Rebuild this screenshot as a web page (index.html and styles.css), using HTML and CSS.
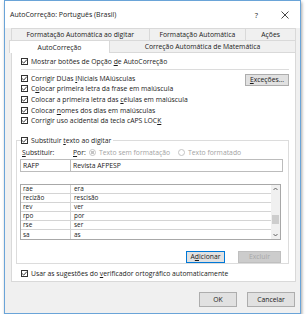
FILE: index.html
```html
<!DOCTYPE html>
<html lang="pt-BR">

<head>
    <meta charset="UTF-8">
    <meta name="viewport" content="width=device-width, initial-scale=1.0">
    <title>AutoCorreção</title>
    <link rel="stylesheet" href="styles.css">
</head>

<body>
    <div class="window">
        <div class="titlebar">
            <span class="title">AutoCorreção: Português (Brasil)</span>
            <span class="help">?</span>
            <svg class="close" width="8" height="8" viewBox="0 0 8 8">
                <path d="M0.5 0.5 L7.5 7.5 M7.5 0.5 L0.5 7.5" stroke="#333" stroke-width="0.9" fill="none" />
            </svg>
        </div>

        <div class="tabs">
            <div class="tab-row back">
                <div class="tab t1">Formatação Automática ao digitar</div>
                <div class="tab t2">Formatação Automática</div>
                <div class="tab t3">Ações</div>
            </div>
            <div class="tab-row front">
                <div class="tab t4 active">AutoCorreção</div>
                <div class="tab t5">Correção Automática de Matemática</div>
            </div>
        </div>

        <div class="panel">
            <label class="check first"><span class="cb"></span><span>Mostrar botões de Opção <u>d</u>e AutoCorreção</span></label>
            <div class="sep"></div>

            <div class="options">
                <div class="option-list">
                    <label class="check"><span class="cb"></span><span>Corrigir DUas <u>I</u>Niciais MAiúsculas</span></label>
                    <label class="check"><span class="cb"></span><span>C<u>o</u>locar primeira letra da frase em maiúscula</span></label>
                    <label class="check"><span class="cb"></span><span>Colocar a primeira letra das <u>c</u>élulas em maiúscula</span></label>
                    <label class="check"><span class="cb"></span><span>Colocar <u>n</u>omes dos dias em maiúsculas</span></label>
                    <label class="check"><span class="cb"></span><span>Corrigir uso acidental da tecla cAPS LOC<u>K</u></span></label>
                </div>
                <div class="btn exc"><span><u>E</u>xceções...</span></div>
            </div>

            <div class="group">
                <label class="check legend"><span class="cb"></span><span>Substituir <u>t</u>exto ao digitar</span></label>

                <div class="labels">
                    <span class="lbl-sub"><u>S</u>ubstituir:</span>
                    <span class="lbl-por"><u>P</u>or:</span>
                    <span class="radio on"></span><span class="dim">Texto sem formatação</span>
                    <span class="radio"></span><span class="dim">Texto formatado</span>
                </div>

                <div class="inputs">
                    <div class="field f-sub">RAFP</div>
                    <div class="field f-por">Revista AFPESP</div>
                </div>

                <div class="list">
                    <div class="rows">
                        <div class="row"><span>rae</span><span>era</span></div>
                        <div class="row"><span>recizão</span><span>rescisão</span></div>
                        <div class="row"><span>rev</span><span>ver</span></div>
                        <div class="row"><span>rpo</span><span>por</span></div>
                        <div class="row"><span>rse</span><span>ser</span></div>
                        <div class="row"><span>sa</span><span>as</span></div>
                    </div>
                    <div class="scrollbar">
                        <svg width="9" height="8" viewBox="0 0 9 8">
                            <path d="M2.5 5 L4.5 3 L6.5 5" stroke="#555" stroke-width="0.9" fill="none" />
                        </svg>
                        <div class="track"><div class="thumb"></div></div>
                        <svg width="9" height="8" viewBox="0 0 9 8">
                            <path d="M2.5 3 L4.5 5 L6.5 3" stroke="#555" stroke-width="0.9" fill="none" />
                        </svg>
                    </div>
                </div>

                <div class="list-buttons">
                    <div class="btn default"><span>A<u>d</u>icionar</span></div>
                    <div class="btn disabled">Excluir</div>
                </div>
            </div>

            <label class="check last"><span class="cb"></span><span>Usar as sugestões do <u>v</u>erificador ortográfico automaticamente</span></label>
        </div>

        <div class="footer">
            <div class="btn ok">OK</div>
            <div class="btn cancel">Cancelar</div>
        </div>
    </div>
</body>

</html>
```

FILE: styles.css
```css
* {
    box-sizing: border-box;
}

body {
    margin: 0;
    background: #ffffff;
    font-family: 'Open Sans', 'Noto Sans', sans-serif;
    font-size: 6.8px;
    color: #1a1a1a;
}

u {
    text-decoration-thickness: 0.6px;
    text-underline-offset: 1px;
}

.window {
    margin-left: 4px;
    width: 297px;
    height: 314px;
    border: 1px solid #6aa4d8;
    background: #f0f0f0;
    box-shadow: 1px 2px 3px rgba(0, 0, 0, 0.35);
    display: flex;
    flex-direction: column;
}

/* title bar */
.titlebar {
    height: 27px;
    background: #ffffff;
    display: flex;
    align-items: center;
    padding-left: 5px;
    font-size: 7px;
}

.title {
    flex: 1;
}

.help {
    margin-right: 23px;
    font-size: 7.5px;
}

.close {
    margin-right: 11px;
}

/* tabs */
.tabs {
    padding-left: 4px;
    padding-right: 4px;
}

.tab-row {
    display: flex;
    height: 12px;
}

.tab {
    display: flex;
    align-items: center;
    justify-content: center;
    border: 1px solid #d9d9d9;
    border-bottom: none;
    background: #f0f0f0;
}

.back .tab {
    border-right: none;
}

.back .tab:last-child {
    border-right: 1px solid #d9d9d9;
}

.t1 {
    margin-left: 2px;
    width: 138px;
}

.t2 {
    width: 97px;
}

.t3 {
    width: 51px;
}

.t4 {
    width: 101px;
}

.t5 {
    flex: 1;
    border-left: none;
}

.tab.active {
    background: #ffffff;
    position: relative;
    z-index: 1;
    height: 13px;
}

/* panel */
.panel {
    margin: 0 4px 0 6px;
    height: 230px;
    background: #ffffff;
    border: 1px solid #d9d9d9;
    padding: 3px 6px 0 9px;
    display: flex;
    flex-direction: column;
}

.check {
    display: flex;
    align-items: center;
    height: 10.7px;
    white-space: nowrap;
}

.cb {
    width: 7px;
    height: 7px;
    border: 1px solid #333;
    margin-right: 3px;
    flex: none;
    background: #fff url("data:image/svg+xml,%3Csvg xmlns='http://www.w3.org/2000/svg' viewBox='0 0 7 7'%3E%3Cpath d='M1.1 3.6 L2.7 5.1 L5.9 1.6' stroke='%23222' stroke-width='0.9' fill='none'/%3E%3C/svg%3E") center / 7px 7px no-repeat;
}

.sep {
    height: 1px;
    background: #dcdcdc;
    margin: 2px 0 3px 0;
}

.options {
    display: flex;
    justify-content: space-between;
    align-items: flex-start;
}

.btn {
    display: flex;
    align-items: center;
    justify-content: center;
    border: 1px solid #adadad;
    background: #e1e1e1;
    white-space: nowrap;
}

.exc {
    width: 44px;
    height: 12px;
    margin-top: 1px;
}

/* replace group */
.group {
    margin: 14px 0 0 -5px;
    border: 1px solid #dcdcdc;
    height: 124px;
    padding: 0 5px 0 3px;
    display: flex;
    flex-direction: column;
}

.legend {
    margin-top: -6px;
    margin-left: 1px;
    background: #ffffff;
    align-self: flex-start;
    padding-right: 2px;
}

.labels {
    display: flex;
    align-items: center;
    height: 10px;
    margin-top: 2px;
    padding-left: 2px;
}

.lbl-sub {
    width: 51px;
}

.lbl-por {
    width: 16px;
}

.radio {
    width: 7px;
    height: 7px;
    border: 1px solid #c4c4c4;
    border-radius: 50%;
    margin-right: 3px;
}

.radio.on {
    background: radial-gradient(circle, #c4c4c4 0 1.5px, #fff 2px);
}

.dim {
    color: #a3a3a3;
    margin-right: 8px;
}

.inputs {
    display: flex;
    height: 13px;
    margin-top: 1px;
}

.field {
    border: 1px solid #bcbcbc;
    display: flex;
    align-items: center;
    padding-left: 2px;
}

.f-sub {
    width: 51px;
}

.f-por {
    flex: 1;
    border-left: none;
}

.list {
    display: flex;
    margin-top: 12px;
    height: 56px;
    border: 1px solid #a8a8a8;
    margin-right: 2px;
}

.rows {
    flex: 1;
    display: flex;
    flex-direction: column;
}

.row {
    display: flex;
    height: 9px;
    border-bottom: 1px solid #d4d4d4;
    font-size: 6.4px;
    align-items: center;
}

.row:last-child {
    border-bottom: none;
}

.row span:first-child {
    width: 50px;
    padding-left: 2px;
    border-right: 1px solid #d4d4d4;
    height: 100%;
    display: flex;
    align-items: center;
}

.row span:last-child {
    padding-left: 3px;
}

.scrollbar {
    width: 9px;
    background: #f0f0f0;
    display: flex;
    flex-direction: column;
}

.track {
    flex: 1;
    position: relative;
}

.thumb {
    position: absolute;
    left: 1px;
    right: 1px;
    top: 22px;
    height: 9px;
    background: #cdcdcd;
}

.list-buttons {
    display: flex;
    justify-content: flex-end;
    gap: 13px;
    margin-top: 11px;
    margin-right: 2px;
}

.list-buttons .btn {
    height: 12px;
}

.default {
    width: 39px;
    border-color: #0078d7;
}

.disabled {
    width: 43px;
    background: #cccccc;
    border-color: #bfbfbf;
    color: #a8a8a8;
}

.last {
    margin-top: 4px;
}

/* footer */
.footer {
    display: flex;
    justify-content: flex-end;
    gap: 10px;
    padding: 10px 5px 0 0;
}

.footer .btn {
    height: 15px;
}

.ok {
    width: 38px;
}

.cancel {
    width: 48px;
}
```
